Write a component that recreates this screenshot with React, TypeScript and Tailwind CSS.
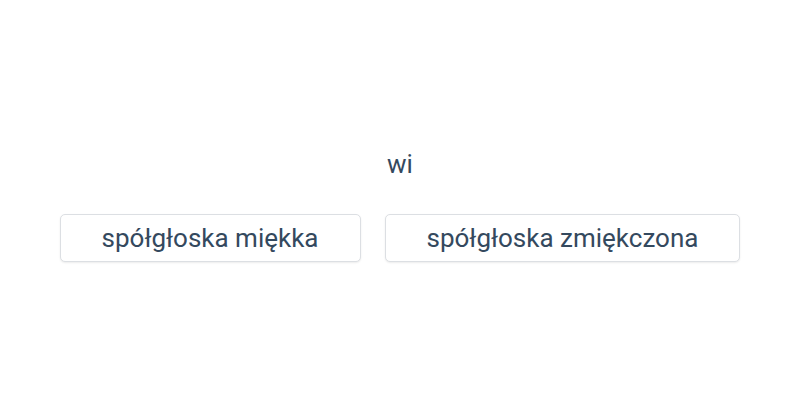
const options = ["spółgłoska miękka", "spółgłoska zmiękczona"];

export default function App() {
  return (
    <div className="w-[800px] h-[400px] bg-white flex flex-col items-center justify-center font-['Roboto',sans-serif] text-[#34495e]">
      <div className="text-[26px] leading-8 mt-[10px]">wi</div>
      <div className="flex gap-6 mt-[34px]">
        {options.map((o) => (
          <button
            key={o}
            className="h-12 px-[41px] border border-[#dcdfe3] rounded-[5px] bg-white shadow-[0_1px_2px_rgba(0,0,0,0.08)] text-[26px] text-[#34495e]"
          >
            {o}
          </button>
        ))}
      </div>
    </div>
  );
}
